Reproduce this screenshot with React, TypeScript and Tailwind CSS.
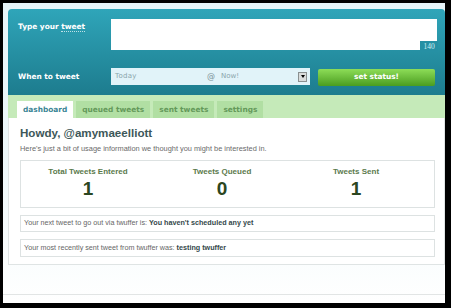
const verdana = "font-['DejaVu_Sans',Verdana,sans-serif]";
const arial = "font-['Liberation_Sans',Arial,sans-serif]";

const stats = [
  { label: 'Total Tweets Entered', value: 1 },
  { label: 'Tweets Queued', value: 0 },
  { label: 'Tweets Sent', value: 1 },
];

const tabs = ['dashboard', 'queued tweets', 'sent tweets', 'settings'];

export default function App() {
  return (
    <div className="w-[451px] h-[308px] bg-black pt-[3px] pl-[3px] pr-[6px] pb-[5px]">
      <div className="h-full flex flex-col bg-gradient-to-b from-[#e6f4f8] via-[#eef8fa] to-white">
        <div className="ml-[5px] mt-[6px]">
          {/* compose panel */}
          <div className={`h-[86px] rounded-t-[4px] bg-gradient-to-b from-[#2fa5b9] to-[#1d7c8e] pl-[10px] pt-[10px] ${verdana}`}>
            <div className="flex">
              <div className="w-[93px] pt-[3px] text-[7.4px] leading-[9px] font-bold text-white">
                Type your <span className="border-b border-dotted border-white/70">tweet</span>
              </div>
              <div className="relative w-[326px] h-[31px] bg-white">
                <div className="absolute right-[-1px] bottom-[-2px] w-[18px] h-[11px] bg-[#2690a4] flex items-center justify-center text-[7.5px] text-[#d3eef3] font-['Liberation_Serif',serif]">
                  140
                </div>
              </div>
            </div>
            <div className="mt-[18px] flex items-center h-[17px]">
              <div className="w-[93px] text-[7.4px] leading-[9px] font-bold text-white">When to tweet</div>
              <div className="w-[199px] h-[17px] bg-[#e1f3f9] flex items-center pl-[4px] text-[7px] text-[#8aa5ab]">
                <span className="w-[92px] tracking-[0.3px]">Today</span>
                <span className="w-[14px] text-[8px] text-[#7b9298]">@</span>
                <span className="flex-1">Now!</span>
                <span className="w-[9px] h-[10px] mr-[3px] bg-[#d9dcdc] border border-[#8a8f90] flex items-center justify-center">
                  <span className="w-0 h-0 border-l-[2px] border-r-[2px] border-t-[3px] border-l-transparent border-r-transparent border-t-black" />
                </span>
              </div>
              <div className="ml-[8px] w-[117px] h-[17px] mt-[1px] rounded-[2px] bg-gradient-to-b from-[#8ddd57] to-[#4a9d1e] flex items-center justify-center text-[7.4px] font-bold text-white">
                set status!
              </div>
            </div>
          </div>

          {/* tabs */}
          <div className={`h-[23px] bg-[#c5eab9] flex items-end pl-[9px] gap-[3px] ${verdana}`}>
            {tabs.map((t, i) => (
              <div
                key={t}
                className={`h-[17px] px-[6px] flex items-center text-[7.4px] font-bold ${
                  i === 0 ? 'bg-white text-[#3a8494]' : 'bg-[#b1dfa3] text-[#64995a]'
                }`}
              >
                {t}
              </div>
            ))}
          </div>

          {/* dashboard */}
          <div className={`bg-white border-x border-b border-[#dfe4e4] pl-[11px] pr-[9px] pt-[8px] pb-[7px] ${arial}`}>
            <h1 className="text-[11.6px] leading-[14px] font-bold text-[#3d5759]">Howdy, @amymaeelliott</h1>
            <p className="mt-[4px] text-[7.4px] leading-[9px] text-[#6a6a6a]">
              Here's just a bit of usage information we thought you might be interested in.
            </p>
            <div className="mt-[7px] h-[48px] border border-[#dde2e2] flex">
              {stats.map((s) => (
                <div key={s.label} className="w-[134px] pt-[6px] text-center">
                  <div className="text-[8px] leading-[10px] font-bold text-[#5b7a4c]">{s.label}</div>
                  <div className="mt-[2px] text-[19px] leading-[19px] font-bold text-[#2b4620]">{s.value}</div>
                </div>
              ))}
            </div>
            <div className="mt-[7px] h-[17px] border border-[#dde2e2] flex items-center pl-[3px] text-[7.2px] text-[#666]">
              Your next tweet to go out via twuffer is:&nbsp;
              <span className="font-bold text-[#34484a]">You haven't scheduled any yet</span>
            </div>
            <div className="mt-[7px] h-[18px] border border-[#dde2e2] flex items-center pl-[3px] text-[7.2px] text-[#666]">
              Your most recently sent tweet from twuffer was:&nbsp;
              <span className="font-bold text-[#34484a]">testing twuffer</span>
            </div>
          </div>
        </div>
        <div className="mt-auto mb-[8px] border-t border-[#e2e5e5]" />
      </div>
    </div>
  );
}
